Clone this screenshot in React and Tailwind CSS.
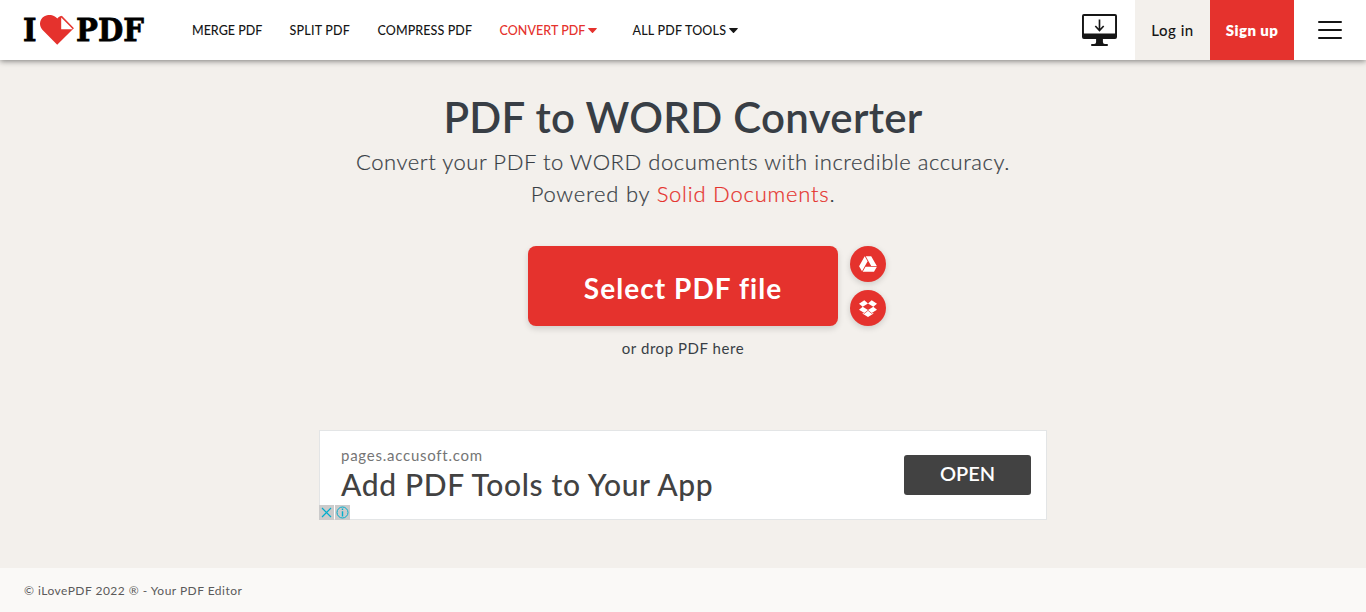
import React from "react";

function Caret() {
  return (
    <svg className="ml-[3px] -mt-[2px] h-[5px] w-[9px]" viewBox="0 0 9 5" fill="currentColor">
      <path d="M.6 0h7.8q.8.1.3.8L5 4.7q-.5.5-1 0L.3.8Q-.2.1.6 0z" />
    </svg>
  );
}

function Logo() {
  return (
    <div className="flex h-[60px] w-[168px] shrink-0 items-center pl-6 font-['DejaVu_Serif',serif] text-[32px] font-bold leading-none text-black [-webkit-text-stroke:0.8px_black]">
      <span className="w-4 shrink-0"><span className="inline-block origin-left scale-x-[0.9] -translate-x-[1px]">I</span></span>
      <svg className="mt-[-1px] h-[30px] w-[34px] shrink-0" viewBox="0 0 34 30">
        <path fill="#e5322d" d="M17.2 29.7 2.6 15C-1.7 10.6-.4 3.6 4.4 1.2 9-1.2 14.2-.2 17.3 3.6 18.5 2.1 19.8 1.1 21.3.7L33.8 13.2 17.2 29.7z" />
        <path fill="#fff" d="M21.2 2.5V14.3H32.7L30.7 12.1 22.2 3.5z" />
        <path fill="none" stroke="#e5322d" d="M21.5 1 33.4 13.3" />
      </svg>
      <span className="ml-[2px] inline-block origin-left scale-x-[0.91]">PDF</span>
    </div>
  );
}

function NavItem({ children, className = "", menu }) {
  return (
    <a className={"flex shrink-0 items-center whitespace-nowrap " + className}>
      {children}
      {menu && <Caret />}
    </a>
  );
}

function Header() {
  return (
    <header className="relative z-10 flex h-[60px] bg-white shadow-[0_1px_6px_rgba(0,0,0,0.5)]">
      <Logo />
      <nav className="ml-6 flex flex-1 pt-[2px] text-[12.5px] font-medium text-[#161616]">
        <NavItem className="w-[97px] tracking-[0px]">MERGE PDF</NavItem>
        <NavItem className="w-[88px] pl-[0.5px] tracking-[0.2px]">SPLIT PDF</NavItem>
        <NavItem className="w-[122px] pl-[0.5px] tracking-[0.1px]">COMPRESS PDF</NavItem>
        <NavItem className="w-[133px] pl-[0.5px] tracking-[0.05px] text-[#e5322d]" menu>CONVERT PDF</NavItem>
        <NavItem className="pl-[0.5px] tracking-[0.2px]" menu>ALL PDF TOOLS</NavItem>
      </nav>
      <div className="flex w-[53px] items-center">
        <svg className="h-8 w-[35px]" viewBox="0 0 36 32" preserveAspectRatio="none">
          <path fill="#161616" fillRule="evenodd" d="M2 0h32q2 0 2 2v21q0 2-2 2H21.500v3q0 2 2 2h3v2h-17v-2h3q2 0 2-2v-3H2q-2 0-2-2V2Q0 0 2 0zM2 2v17.500h32V2z" />
          <path fill="none" stroke="#161616" strokeWidth="1.700" d="M18 5.500v11M13.700 12l4.300 4.500 4.300-4.500" />
        </svg>
      </div>
      <a className="flex w-[75px] items-center justify-center bg-[#f3f0ec] text-[15px] font-medium tracking-[0.5px] text-[#161616]">Log in</a>
      <a className="flex w-[84px] items-center justify-center bg-[#e5322d] text-[15px] font-extrabold tracking-[0.4px] text-white">Sign up</a>
      <button className="flex w-[72px] flex-col items-center justify-center gap-[6px]">
        <span className="h-0.5 w-6 rounded bg-[#161616]" />
        <span className="h-0.5 w-6 rounded bg-[#161616]" />
        <span className="h-0.5 w-6 rounded bg-[#161616]" />
      </button>
    </header>
  );
}

function RoundButton({ children }) {
  return (
    <button className="flex h-9 w-9 items-center justify-center rounded-full bg-[#e5322d] shadow-[0_2px_6px_rgba(0,0,0,0.16)]">
      {children}
    </button>
  );
}

function Uploader() {
  return (
    <div className="mt-9 ml-12 flex">
      <button className="h-20 w-[310px] rounded-lg bg-[#e5322d] pt-[3px] text-[28px] font-bold tracking-[1.05px] text-white shadow-[0_3px_6px_rgba(0,0,0,0.14)]">
        Select PDF file
      </button>
      <div className="ml-3 flex flex-col gap-2">
        <RoundButton>
          <svg className="h-[16px] w-[18px]" viewBox="0 0 18 16" fill="#fff">
            <path d="M5.700.2 8.600 5.200 3 15.300.1 10.300zM6.700.2h5.500l5.600 9.700h-5.600zM6.500 10.700h11.400L15 15.700H3.700z" />
          </svg>
        </RoundButton>
        <RoundButton>
          <svg className="h-[17px] w-[18px]" viewBox="0 0 18 17" fill="#fff">
            <path d="M5.300.3 9 3.400 3.700 6.700 0 3.700zM12.700.3 18 3.700 14.300 6.700 9 3.400zM0 9.800 3.700 6.700 9 10 5.300 13.100zM14.300 6.700 18 9.800 12.700 13.100 9 10zM9 10.700l3.700 3.100 1.600-1v1L9 17l-5.300-3.200v-1l1.600 1z" />
          </svg>
        </RoundButton>
      </div>
    </div>
  );
}

function Advert() {
  return (
    <section className="relative mt-[71px] flex h-[90px] w-[728px] items-center border border-[#e3e5e6] bg-white pl-[21px] pr-[15px]">
      <div className="flex-1 pb-[3px]">
        <div className="text-[15px] leading-[20px] tracking-[0.75px] text-[#757575]">pages.accusoft.com</div>
        <div className="mt-px text-[30px] font-medium leading-[36px] tracking-[0.65px] text-[#424242]">Add PDF Tools to Your App</div>
      </div>
      <button className="h-10 w-[127px] rounded-[3px] bg-[#424242] pb-[5px] text-[20px] font-semibold text-white">OPEN</button>
      <div className="absolute -bottom-px -left-px flex gap-px">
        <svg className="h-[15px] w-[15px] bg-[#cbcbcb]" viewBox="0 0 15 15" fill="none" stroke="#00aecd" strokeWidth="1.200">
          <path d="m3 3 9 9M12 3l-9 9" />
        </svg>
        <svg className="h-[15px] w-[15px] bg-[#cbcbcb]" viewBox="0 0 15 15" fill="none" stroke="#00aecd">
          <circle cx="7.500" cy="7.500" r="5.500" />
          <path strokeWidth="1.400" d="M7.500 3.500V5M7.500 6.200v5.300" />
        </svg>
      </div>
    </section>
  );
}

export default function App() {
  return (
    <div className="flex h-[612px] w-[1366px] flex-col overflow-hidden bg-[#f3f0ec] font-['Lato','Liberation_Sans',sans-serif]">
      <Header />
      <main className="flex flex-1 flex-col items-center pt-[31px]">
        <h1 className="whitespace-nowrap text-[42px] font-semibold leading-[52px] tracking-[0.3px] text-[#383e45]">PDF to WORD Converter</h1>
        <div className="mt-[3px] whitespace-nowrap text-center text-[22px] font-light leading-8 text-[#383e45] [-webkit-text-stroke:0.2px_currentColor]">
          <div className="tracking-[0.55px]">Convert your PDF to WORD documents with incredible accuracy.</div>
          <div className="tracking-[0.78px]">Powered by <a className="text-[#e5322d]">Solid Documents</a>.</div>
        </div>
        <Uploader />
        <div className="mt-[11px] text-[15px] leading-[22px] tracking-[0.55px] text-[#383e45]">or drop PDF here</div>
        <Advert />
      </main>
      <footer className="flex h-11 items-center bg-[#faf9f7] pl-6 pt-px text-[12px] tracking-[0.47px] text-[#5a5a5a]">© iLovePDF 2022 ® - Your PDF Editor</footer>
    </div>
  );
}
